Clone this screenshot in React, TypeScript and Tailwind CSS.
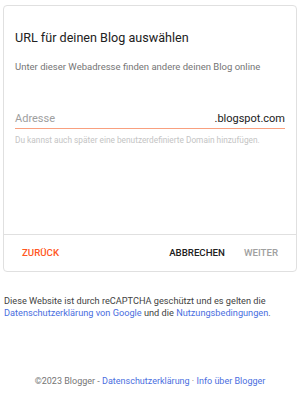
import React from 'react';

export default function App() {
  return (
    <div className="w-[300px] h-[397px] bg-white flex flex-col font-['Roboto',sans-serif]">
      {/* dialog card */}
      <div className="mx-[3px] mt-[5px] h-[267px] rounded-[4px] border border-[#e0e0e0] flex flex-col">
        <div className="flex-1 px-[11px] pt-[23px]">
          <h1 className="text-[12.6px] leading-[18px] text-[#212121] font-normal">URL für deinen Blog auswählen</h1>
          <p className="mt-[13px] text-[9.5px] leading-[13px] text-[#757575]">
            Unter dieser Webadresse finden andere deinen Blog online
          </p>
          <div className="mt-[38px] flex items-end border-b-[1.5px] border-[#f9a07f] pb-[2px]">
            <span className="flex-1 text-[11px] leading-[15px] text-[#9e9e9e]">Adresse</span>
            <span className="text-[11px] leading-[15px] text-[#212121]">.blogspot.com</span>
          </div>
          <p className="mt-[6px] text-[8.3px] leading-[10px] text-[#c4c4c4]">
            Du kannst auch später eine benutzerdefinierte Domain hinzufügen.
          </p>
        </div>
        <div className="h-[37px] border-t border-[#e0e0e0] flex items-center px-[18px] text-[9.7px] font-medium">
          <span className="text-[#ff5722]">ZURÜCK</span>
          <span className="ml-auto text-[#212121]">ABBRECHEN</span>
          <span className="ml-[19px] text-[#a0a0a0]">WEITER</span>
        </div>
      </div>

      <p className="mt-[23px] px-[4px] text-[9.2px] leading-[12px] text-[#424242]">
        Diese Website ist durch reCAPTCHA geschützt und es gelten die{' '}
        <a className="text-[#4a6ee0]">Datenschutzerklärung von Google</a> und die{' '}
        <a className="text-[#4a6ee0]">Nutzungsbedingungen</a>.
      </p>

      <p className="mt-auto mb-[10px] text-center text-[9px] leading-[12px] text-[#757575]">
        ©2023 Blogger - <a className="text-[#4a6ee0]">Datenschutzerklärung</a> ·{' '}
        <a className="text-[#4a6ee0]">Info über Blogger</a>
      </p>
    </div>
  );
}
